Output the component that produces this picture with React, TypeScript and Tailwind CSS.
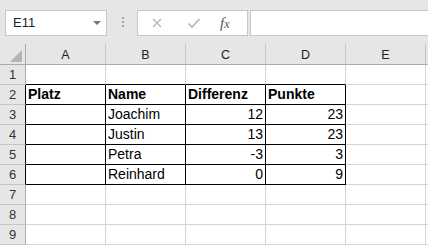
import React from "react";

type Cell = { v?: string; bold?: boolean; right?: boolean };

const cols = ["A", "B", "C", "D", "E"];

// rows 1..9, cells A..E
const data: Record<number, Cell[]> = {
  2: [{ v: "Platz", bold: true }, { v: "Name", bold: true }, { v: "Differenz", bold: true }, { v: "Punkte", bold: true }],
  3: [{}, { v: "Joachim" }, { v: "12", right: true }, { v: "23", right: true }],
  4: [{}, { v: "Justin" }, { v: "13", right: true }, { v: "23", right: true }],
  5: [{}, { v: "Petra" }, { v: "-3", right: true }, { v: "3", right: true }],
  6: [{}, { v: "Reinhard" }, { v: "0", right: true }, { v: "9", right: true }],
};

function inTable(row: number, col: number) {
  return row >= 2 && row <= 6 && col <= 3;
}

function Toolbar() {
  return (
    <div className="flex h-[44px] items-start bg-[#e6e6e6] pl-[5px] pt-[10px]">
      {/* name box */}
      <div className="flex h-[26px] w-[102px] items-center border border-[#c6c6c6] bg-white pl-[7px] pr-[5px] text-[13px] text-[#222]">
        <span>E11</span>
        <span className="ml-auto h-0 w-0 border-x-[4px] border-t-[4px] border-x-transparent border-t-[#777]" />
      </div>
      {/* grip dots */}
      <div className="ml-[15px] mt-[7px] flex w-[2px] flex-col gap-[2px]">
        <span className="h-[2px] w-[2px] bg-[#a6a6a6]" />
        <span className="h-[2px] w-[2px] bg-[#a6a6a6]" />
        <span className="h-[2px] w-[2px] bg-[#a6a6a6]" />
      </div>
      {/* formula buttons */}
      <div className="ml-[13px] flex h-[26px] w-[111px] items-center border border-[#c6c6c6] bg-white">
        <svg className="ml-[13px]" width="12" height="12" viewBox="0 0 12 12">
          <path d="M2 2 L10 10 M10 2 L2 10" stroke="#b4b4b4" strokeWidth="1.3" fill="none" />
        </svg>
        <svg className="ml-[24px]" width="14" height="12" viewBox="0 0 14 12">
          <path d="M1.5 6.5 L5 10 L12.5 2" stroke="#b4b4b4" strokeWidth="1.6" fill="none" />
        </svg>
        <span className="ml-[19px] font-['Liberation_Serif',serif] text-[15px] italic text-[#555]">
          f<span className="text-[12px]">x</span>
        </span>
      </div>
      <div className="ml-[2px] h-[26px] flex-1 border border-r-0 border-[#c6c6c6] bg-white" />
    </div>
  );
}

function HeaderRow() {
  return (
    <div className="flex h-[21px] border-b border-[#ababab] bg-[#e6e6e6] text-[12.5px] text-[#222]">
      <div className="relative w-[26px] shrink-0 border-r border-[#ababab]">
        <span className="absolute bottom-[2px] right-[3px] h-0 w-0 border-b-[12px] border-l-[12px] border-b-[#b4b4b4] border-l-transparent" />
      </div>
      {cols.map((c) => (
        <div key={c} className="flex w-[80px] shrink-0 items-center justify-center border-r border-[#c6c6c6] pt-[2px]">
          {c}
        </div>
      ))}
      <div className="flex-1" />
    </div>
  );
}

function Row({ n }: { n: number }) {
  const cells = data[n] ?? [];
  return (
    <div className="flex h-[20px]">
      <div
        className={`flex w-[26px] shrink-0 items-center justify-center border-b border-r border-b-[#c6c6c6] bg-[#e6e6e6] pt-[1px] text-[13px] text-[#333] ${
          n >= 2 && n <= 6 ? "border-r-black" : "border-r-[#ababab]"
        }`}
      >
        {n}
      </div>
      {cols.map((c, i) => {
        const cell = cells[i] ?? {};
        const black = inTable(n, i);
        const blackBottom = black || (n === 1 && i <= 3);
        return (
          <div
            key={c}
            className={`flex w-[80px] shrink-0 items-end overflow-hidden whitespace-nowrap border-b border-r px-[2px] pb-[1px] text-[14px] leading-[17px] ${
              blackBottom ? "border-b-black" : "border-b-[#d4d4d4]"
            } ${black ? "border-r-black" : "border-r-[#d4d4d4]"} ${
              cell.right ? "justify-end" : "justify-start"
            } ${cell.bold ? "font-bold" : ""}`}
          >
            {cell.v}
          </div>
        );
      })}
      <div className="flex-1 border-b border-[#d4d4d4]" />
    </div>
  );
}

export default function App() {
  return (
    <div className="h-[245px] w-[428px] overflow-hidden bg-white font-['Liberation_Sans',Arial,sans-serif] text-black">
      <Toolbar />
      <HeaderRow />
      {[1, 2, 3, 4, 5, 6, 7, 8, 9].map((n) => (
        <Row key={n} n={n} />
      ))}
    </div>
  );
}
